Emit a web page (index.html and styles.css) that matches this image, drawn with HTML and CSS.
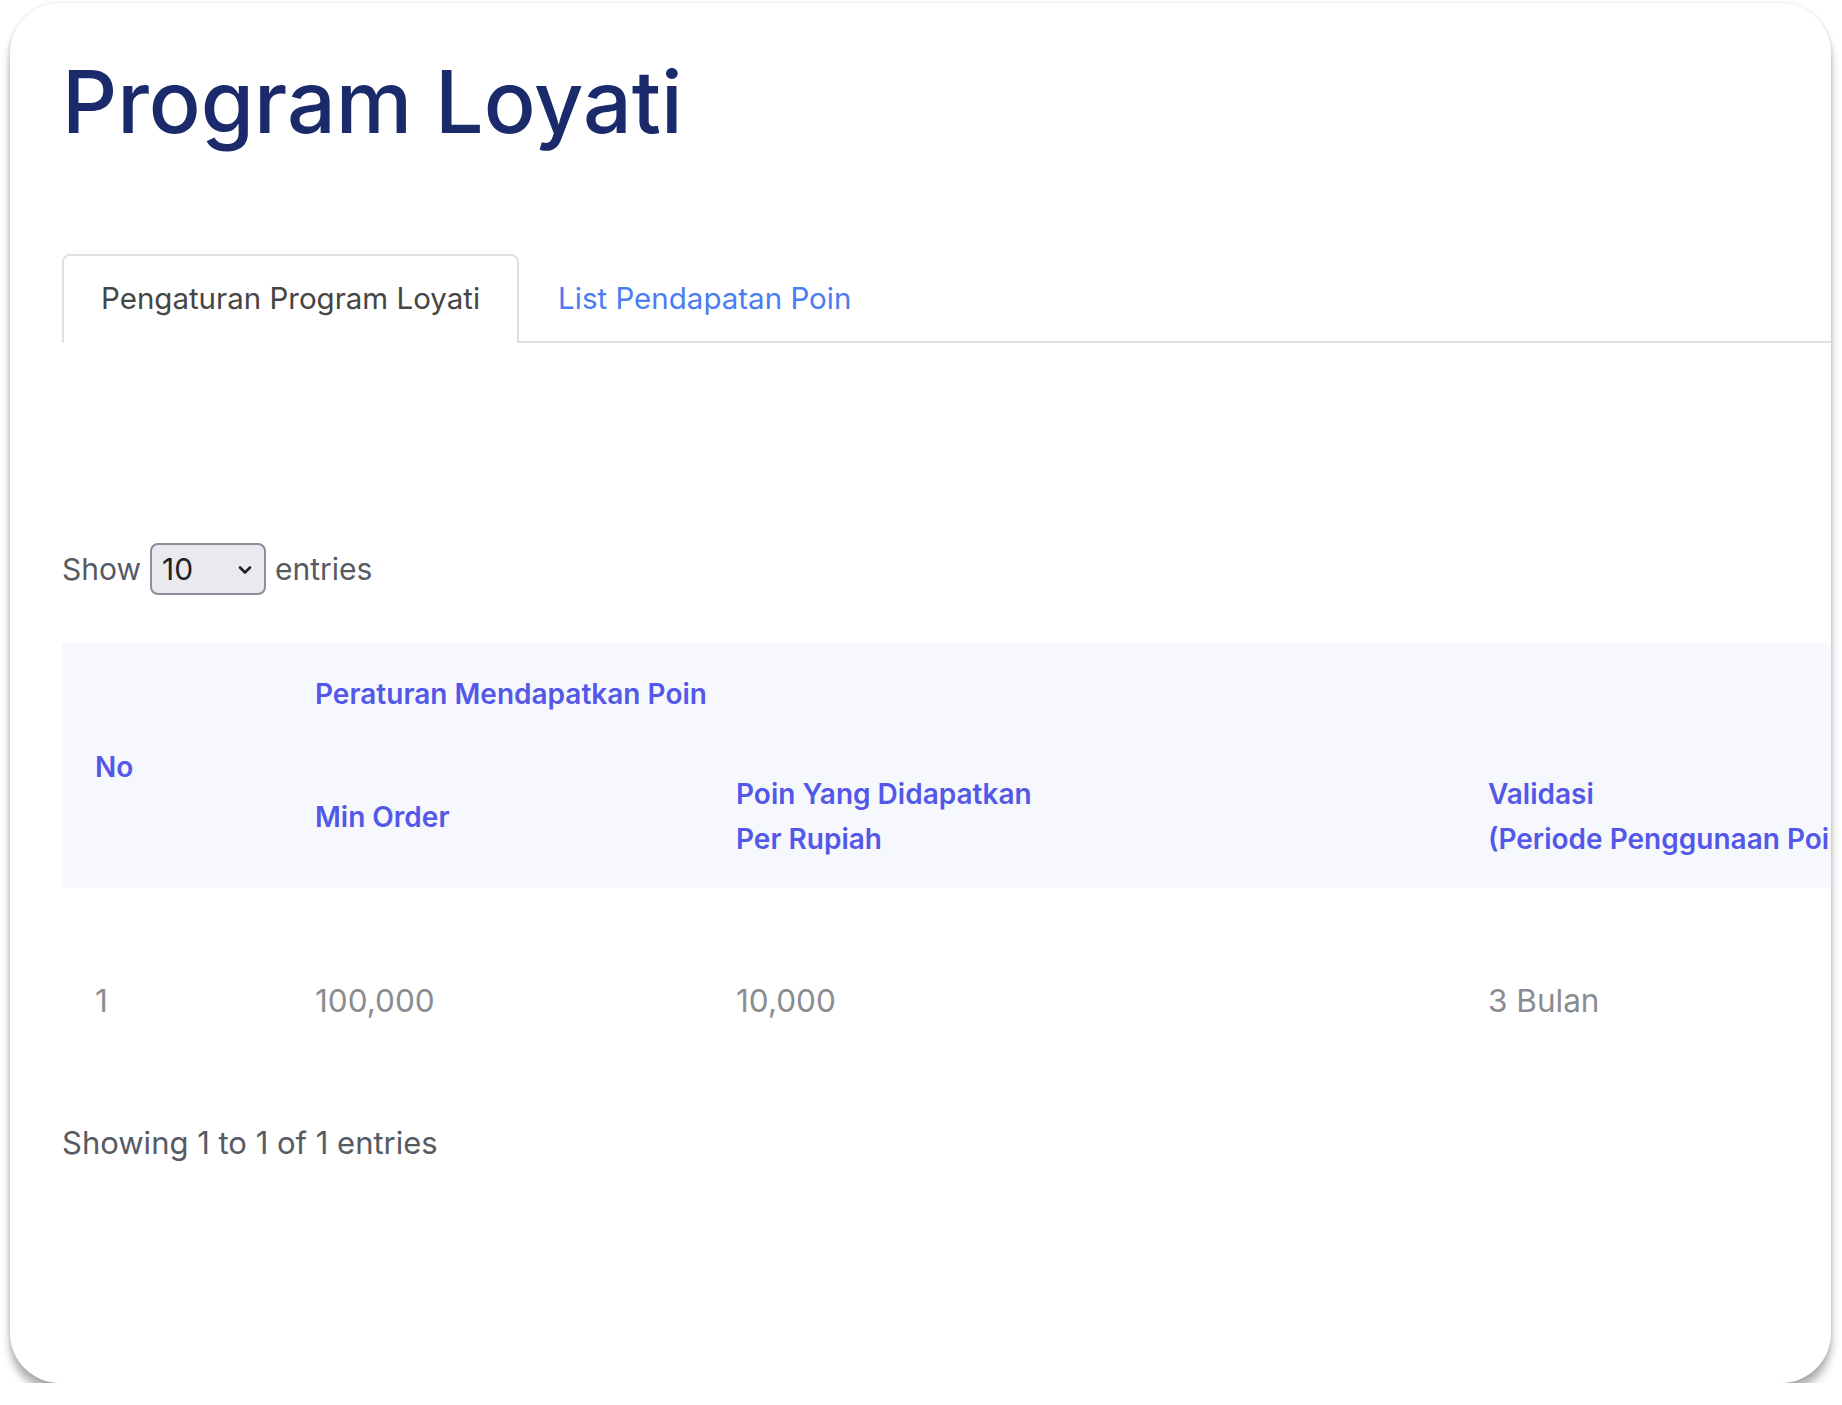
FILE: index.html
```html
<!DOCTYPE html>
<html lang="id">
<head>
    <meta charset="UTF-8">
    <meta name="viewport" content="width=device-width, initial-scale=1.0">
    <title>Program Loyati</title>
    <link rel="stylesheet" href="styles.css">
</head>
<body>
    <div class="card">
        <h1 class="page-title">Program Loyati</h1>

        <ul class="nav-tabs">
            <li class="nav-item"><a class="nav-link active" href="#">Pengaturan Program Loyati</a></li>
            <li class="nav-item"><a class="nav-link" href="#">List Pendapatan Poin</a></li>
        </ul>

        <div class="tab-content">
            <div class="dt-length">
                <label>Show</label>
                <span class="select-wrap">
                    <select class="dt-select">
                        <option>10</option>
                        <option>25</option>
                        <option>50</option>
                        <option>100</option>
                    </select>
                    <svg class="chevron" width="14" height="10" viewBox="0 0 14 10">
                        <path d="M2 2.5 L7 7.5 L12 2.5" fill="none" stroke="#222" stroke-width="2.6" stroke-linecap="round" stroke-linejoin="round"/>
                    </svg>
                </span>
                <label>entries</label>
            </div>

            <table class="dt-table">
                <colgroup>
                    <col style="width: 220px">
                    <col style="width: 421px">
                    <col style="width: 752px">
                    <col style="width: 560px">
                </colgroup>
                <thead>
                    <tr>
                        <th rowspan="2">No</th>
                        <th colspan="3">Peraturan Mendapatkan Poin</th>
                    </tr>
                    <tr>
                        <th>Min Order</th>
                        <th>Poin Yang Didapatkan<br>Per Rupiah</th>
                        <th class="nowrap">Validasi<br>(Periode Penggunaan Poin)</th>
                    </tr>
                </thead>
                <tbody>
                    <tr>
                        <td>1</td>
                        <td>100,000</td>
                        <td>10,000</td>
                        <td>3 Bulan</td>
                    </tr>
                </tbody>
            </table>

            <div class="dt-info">Showing 1 to 1 of 1 entries</div>
        </div>
    </div>
</body>
</html>
```

FILE: styles.css
```css
body {
    margin: 0;
    background: #fff;
    font-family: Inter, "Noto Sans", sans-serif;
}

.card {
    box-sizing: border-box;
    width: 1821px;
    height: 1380px;
    margin: 3px 0 0 10px;
    padding: 48px 0 0 52px;
    background: #fff;
    border-radius: 50px;
    overflow: hidden;
    box-shadow: 0 0 4px rgba(0, 0, 0, 0.12), 0 10px 9px rgba(0, 0, 0, 0.3);
}

.page-title {
    margin: 0;
    font-size: 86px;
    line-height: 1.2;
    font-weight: 500;
    color: #1b2a6b;
}

/* 탭 */
.nav-tabs {
    display: flex;
    margin: 100px 0 0;
    padding: 0;
    list-style: none;
    border-bottom: 2px solid #dfe1e5;
}

.nav-item {
    margin-bottom: -2px;
}

.nav-link {
    display: block;
    padding: 20px 37px;
    font-size: 29.5px;
    line-height: 45px;
    color: #4a7cf2;
    text-decoration: none;
    border: 2px solid transparent;
    border-bottom: 0;
    border-radius: 8px 8px 0 0;
}

.nav-link.active {
    color: #454545;
    background: #fff;
    border-color: #dfe1e5;
    padding-bottom: 22px;
}

.tab-content {
    padding-top: 200px;
}

/* show entries */
.dt-length {
    display: flex;
    align-items: center;
    gap: 9px;
    font-size: 30px;
    color: #555a63;
}

.select-wrap {
    position: relative;
    display: inline-block;
}

.dt-select {
    appearance: none;
    -webkit-appearance: none;
    box-sizing: border-box;
    width: 116px;
    height: 52px;
    padding: 0 0 0 10px;
    font-family: Inter, sans-serif;
    font-size: 30px;
    color: #222;
    background: #e9e9ef;
    border: 2px solid #8d8d97;
    border-radius: 8px;
}

.chevron {
    position: absolute;
    right: 14px;
    top: 22px;
    pointer-events: none;
}

/* 테이블 */
.dt-table {
    width: 1953px;
    margin-top: 48px;
    border-collapse: collapse;
    table-layout: fixed;
}

.dt-table th {
    padding: 29px 33px 26px;
    background: #f7f8fe;
    font-size: 28px;
    line-height: 45px;
    font-weight: 600;
    color: #5358e8;
    text-align: left;
    vertical-align: middle;
}

.dt-table th.nowrap {
    white-space: nowrap;
}

.dt-table td {
    padding: 90px 33px;
    font-size: 31.5px;
    line-height: 46px;
    color: #8a8c91;
}

.dt-info {
    margin-top: 6px;
    font-size: 31px;
    line-height: 45px;
    color: #555a63;
}
```
